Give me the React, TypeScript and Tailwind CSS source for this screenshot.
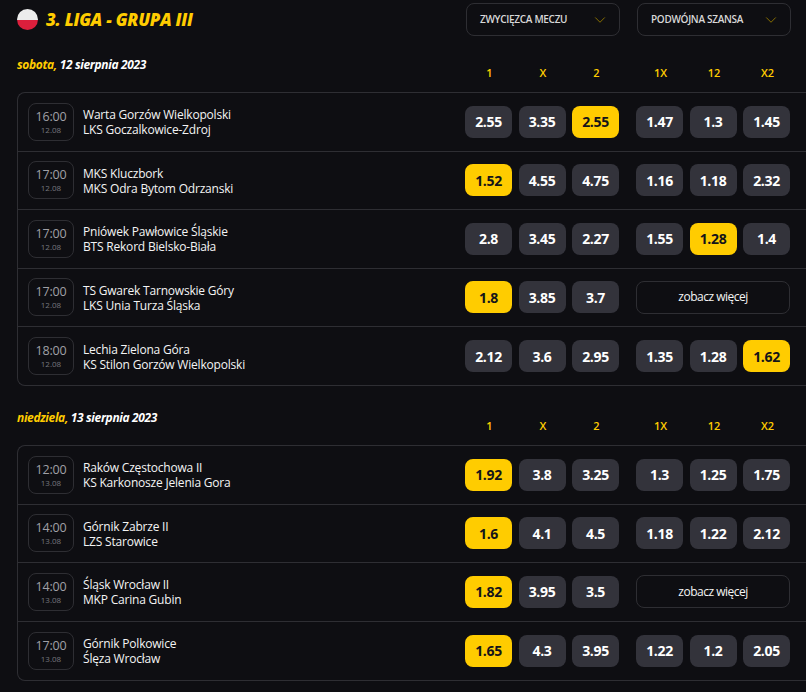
import { FC } from "react";
import { ChevronDown } from "lucide-react";

type Match = {
  time: string;
  date: string;
  home: string;
  away: string;
  odds: string[];
  hot: number[];
};

const saturday: Match[] = [
  { time: "16:00", date: "12.08", home: "Warta Gorzów Wielkopolski", away: "LKS Goczalkowice-Zdroj", odds: ["2.55", "3.35", "2.55", "1.47", "1.3", "1.45"], hot: [2] },
  { time: "17:00", date: "12.08", home: "MKS Kluczbork", away: "MKS Odra Bytom Odrzanski", odds: ["1.52", "4.55", "4.75", "1.16", "1.18", "2.32"], hot: [0] },
  { time: "17:00", date: "12.08", home: "Pniówek Pawłowice Śląskie", away: "BTS Rekord Bielsko-Biała", odds: ["2.8", "3.45", "2.27", "1.55", "1.28", "1.4"], hot: [4] },
  { time: "17:00", date: "12.08", home: "TS Gwarek Tarnowskie Góry", away: "LKS Unia Turza Śląska", odds: ["1.8", "3.85", "3.7"], hot: [0] },
  { time: "18:00", date: "12.08", home: "Lechia Zielona Góra", away: "KS Stilon Gorzów Wielkopolski", odds: ["2.12", "3.6", "2.95", "1.35", "1.28", "1.62"], hot: [5] },
];

const sunday: Match[] = [
  { time: "12:00", date: "13.08", home: "Raków Częstochowa II", away: "KS Karkonosze Jelenia Gora", odds: ["1.92", "3.8", "3.25", "1.3", "1.25", "1.75"], hot: [0] },
  { time: "14:00", date: "13.08", home: "Górnik Zabrze II", away: "LZS Starowice", odds: ["1.6", "4.1", "4.5", "1.18", "1.22", "2.12"], hot: [0] },
  { time: "14:00", date: "13.08", home: "Śląsk Wrocław II", away: "MKP Carina Gubin", odds: ["1.82", "3.95", "3.5"], hot: [0] },
  { time: "17:00", date: "13.08", home: "Górnik Polkowice", away: "Ślęza Wrocław", odds: ["1.65", "4.3", "3.95", "1.22", "1.2", "2.05"], hot: [0] },
];

const Odd: FC<{ value: string; hot: boolean }> = ({ value, hot }) => (
  <div className={`w-[47px] h-[32px] rounded-lg flex items-center justify-center text-[14px] font-bold tracking-tight ${hot ? "bg-[#ffcc00] text-[#14141a]" : "bg-[#33333b] text-white"}`}>
    {value}
  </div>
);

const Row: FC<{ m: Match; last: boolean }> = ({ m, last }) => (
  <div className={`flex items-center ${last ? "h-[58px]" : "h-[58.5px] border-b border-[#2e2e33]"}`}>
    <div className="ml-[10px] w-[46px] h-[38px] pt-[1px] rounded-lg border border-[#2e2e33] flex flex-col items-center justify-center">
      <div className="text-[12.5px] leading-[14px] tracking-[-0.2px] text-[#a0a0a6]">{m.time}</div>
      <div className="text-[8px] leading-[11px] text-[#77777e]">{m.date}</div>
    </div>
    <div className="ml-[9px] w-[382px] pt-[1px] text-[12px] leading-[15px] font-medium tracking-[-0.2px] text-[#f4f4f4]">
      <div>{m.home}</div>
      <div>{m.away}</div>
    </div>
    <div className="flex gap-[6.5px]">
      {m.odds.slice(0, 3).map((o, i) => <Odd key={i} value={o} hot={m.hot.includes(i)} />)}
    </div>
    {m.odds.length > 3 ? (
      <div className="ml-[17px] flex gap-[6.5px]">
        {m.odds.slice(3).map((o, i) => <Odd key={i} value={o} hot={m.hot.includes(i + 3)} />)}
      </div>
    ) : (
      <div className="ml-[17px] w-[154px] h-[33px] rounded-lg border border-[#2e2e33] flex items-center justify-center text-[12px] font-medium tracking-[-0.5px] text-[#f4f4f4]">
        zobacz więcej
      </div>
    )}
  </div>
);

const Day: FC<{ day: string; date: string; matches: Match[] }> = ({ day, date, matches }) => (
  <section>
    <div className="relative h-[35px]">
      <div className="text-[12px] leading-[16px] font-bold italic tracking-[-0.35px] text-white">
        <span className="text-[#ffcc00]">{day},</span> {date}
      </div>
      <div className="absolute left-[449px] top-[8px] flex gap-[6.5px] text-[11px] leading-[15px] font-semibold text-[#ffcc00]">
        {["1", "X", "2"].map((l) => <div key={l} className="w-[47px] text-center">{l}</div>)}
        <div className="w-[4px]" />
        {["1X", "12", "X2"].map((l) => <div key={l} className="w-[47px] text-center">{l}</div>)}
      </div>
    </div>
    <div className="border-l border-y border-[#2e2e33] rounded-l-lg">
      {matches.map((m, i) => <Row key={i} m={m} last={i === matches.length - 1} />)}
    </div>
  </section>
);

const Select: FC<{ label: string }> = ({ label }) => (
  <div className="w-[154px] h-[33px] rounded-lg border border-[#2e2e33] flex items-center justify-between pl-[13px] pr-[10px] text-[10px] font-semibold tracking-[-0.3px] text-[#d8d8d8]">
    <span>{label}</span>
    <ChevronDown className="w-[18px] h-[18px] text-[#8f7400]" strokeWidth={1.25} />
  </div>
);

export default function App() {
  return (
    <div className="w-[806px] h-[692px] overflow-hidden bg-[#0e0e12] pl-[17px] font-['Open_Sans',sans-serif]">
      <div className="h-[57px] pt-[3px] flex items-start">
        <div className="mt-[6px] w-[21px] h-[21px] rounded-full overflow-hidden flex flex-col">
          <div className="h-1/2 bg-[#ececec]" />
          <div className="h-1/2 bg-[#dc1f3c]" />
        </div>
        <div className="ml-[8px] mt-[5px] w-[420px] text-[17px] leading-[24px] font-extrabold italic tracking-[-0.25px] text-[#ffcc00]">3. LIGA - GRUPA III</div>
        <div className="flex gap-[17px]">
          <Select label="ZWYCIĘZCA MECZU" />
          <Select label="PODWÓJNA SZANSA" />
        </div>
      </div>
      <Day day="sobota" date="12 sierpnia 2023" matches={saturday} />
      <div className="h-[24px]" />
      <Day day="niedziela" date="13 sierpnia 2023" matches={sunday} />
    </div>
  );
}
